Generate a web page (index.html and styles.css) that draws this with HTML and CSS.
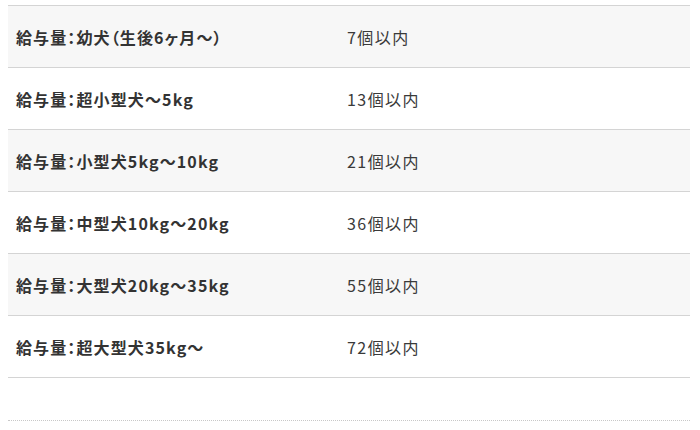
FILE: index.html
```html
<!DOCTYPE html>
<html lang="ja">
<head>
<meta charset="utf-8">
<link rel="stylesheet" href="styles.css">
</head>
<body>
<div class="spec">
  <div class="row odd"><div class="label">給与量：幼犬（生後6ヶ月～）</div><div class="value">7個以内</div></div>
  <div class="row"><div class="label">給与量：超小型犬～5kg</div><div class="value">13個以内</div></div>
  <div class="row odd"><div class="label">給与量：小型犬5kg～10kg</div><div class="value">21個以内</div></div>
  <div class="row"><div class="label">給与量：中型犬10kg～20kg</div><div class="value">36個以内</div></div>
  <div class="row odd"><div class="label">給与量：大型犬20kg～35kg</div><div class="value">55個以内</div></div>
  <div class="row"><div class="label">給与量：超大型犬35kg～</div><div class="value">72個以内</div></div>
</div>
<div class="divider"></div>
</body>
</html>
```
FILE: styles.css
```css
html, body {
  margin: 0;
  padding: 0;
  background: #fff;
}
body {
  padding: 5px 10px 0 8px;
  font-family: "Noto Sans CJK JP", "Noto Sans", sans-serif;
  color: #333;
}
.spec {
  border-top: 1px solid #d4d4d4;
}
.row {
  display: grid;
  grid-template-columns: 331px 1fr;
  align-items: center;
  height: 61px;
  border-bottom: 1px solid #d4d4d4;
}
.row.odd {
  background: #f7f7f7;
}
.label {
  padding-left: 8px;
  font-size: 16px;
  font-weight: 700;
  letter-spacing: 0.07em;
  font-feature-settings: "palt";
}
.value {
  padding-left: 8px;
  font-size: 16px;
  font-weight: 400;
  letter-spacing: 0.09em;
  color: #3a3a3a;
}
.divider {
  margin-top: 42px;
  border-top: 1px dotted #c8c8c8;
}
```
